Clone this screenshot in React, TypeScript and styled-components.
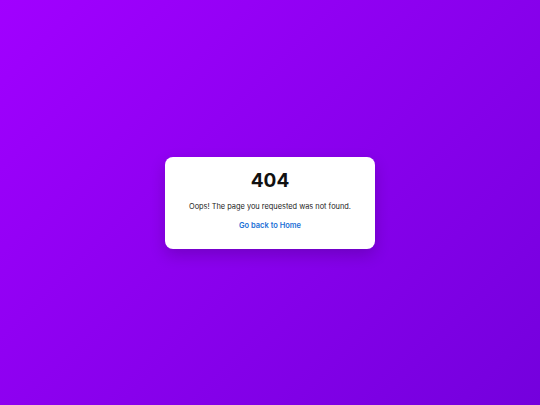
import styled, { createGlobalStyle } from "styled-components";

const Global = createGlobalStyle`
  html, body {
    margin: 0;
    padding: 0;
    height: 100%;
  }
  body {
    font-family: Inter, "Liberation Sans", sans-serif;
  }
  #root {
    height: 100%;
  }
`;

const Page = styled.div`
  min-height: 100vh;
  display: flex;
  align-items: center;
  justify-content: center;
  background: linear-gradient(135deg, #a100ff 0%, #7400dd 100%);
`;

const Card = styled.div`
  width: 210px;
  height: 92px;
  box-sizing: border-box;
  background: #ffffff;
  border-radius: 8px;
  padding: 12px 16px 0;
  text-align: center;
  box-shadow: 0 6px 16px rgba(0, 0, 0, 0.18);
`;

const Code = styled.h1`
  margin: 0;
  font-size: 19px;
  font-weight: 700;
  color: #111111;
  line-height: 24px;
`;

const Message = styled.p`
  margin: 8px 0 0;
  font-size: 7.4px;
  color: #222222;
  line-height: 11px;
`;

const HomeLink = styled.a`
  display: inline-block;
  margin-top: 6px;
  font-size: 7.5px;
  font-weight: 600;
  color: #1a6fd6;
  text-decoration: none;
  line-height: 11px;
`;

export default function App() {
  return (
    <Page>
      <Global />
      <Card>
        <Code>404</Code>
        <Message>Oops! The page you requested was not found.</Message>
        <HomeLink href="#">Go back to Home</HomeLink>
      </Card>
    </Page>
  );
}
